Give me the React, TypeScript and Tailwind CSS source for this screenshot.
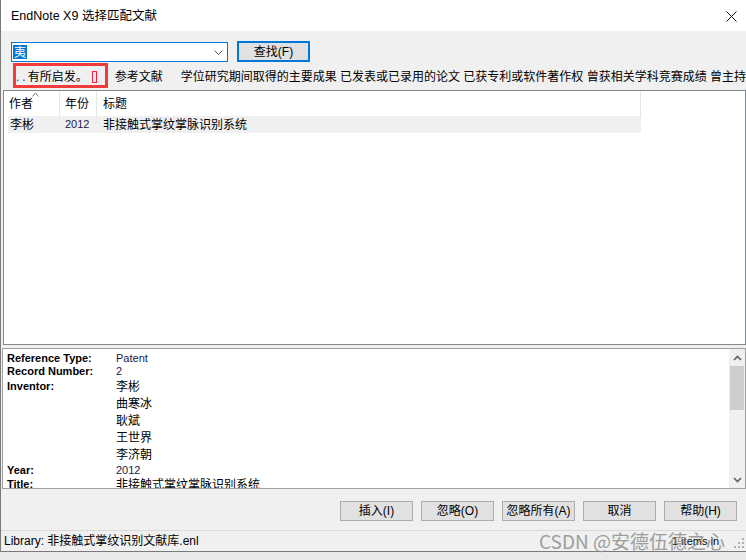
export default function App() {
  const inventors = ["李彬", "曲寒冰", "耿斌", "王世界", "李济朝"];
  const buttons = ["插入(I)", "忽略(O)", "忽略所有(A)", "取消", "帮助(H)"];

  return (
    <div className="w-[746px] h-[560px] overflow-hidden bg-[#e9e9e9] text-[12px] text-black font-['Liberation_Sans','Noto_Sans_CJK_SC',sans-serif] select-none">
      <div className="relative flex flex-col h-[552px] border-l border-b border-[#7a7a7a] bg-[#f0f0f0]">
        {/* Title bar */}
        <div className="h-[31px] shrink-0 bg-white flex items-center justify-between pl-[10px] pr-[9px]">
          <span className="leading-none pt-[1px] text-[12.5px]">EndNote X9 选择匹配文献</span>
          <svg width="11" height="11" viewBox="0 0 11 11" className="mt-[2px]">
            <path d="M0.5 0.5 L10.5 10.5 M10.5 0.5 L0.5 10.5" stroke="#111" strokeWidth="1" fill="none" />
          </svg>
        </div>

        {/* Search row */}
        <div className="h-[31px] shrink-0 flex items-start pt-[10px] pl-[10px]">
          <div className="w-[217px] h-[20px] mt-[1px] bg-white border border-[#0078d7] flex items-center pl-[1px] pr-[4px]">
            <span className="h-[14px] w-[14px] bg-[#0078d7] text-white text-[12px] leading-[14px] flex items-center justify-center font-['Noto_Sans_CJK_SC',sans-serif]">
              夷
            </span>
            <svg width="9" height="5" viewBox="0 0 9 5" className="ml-auto">
              <path d="M0.5 0.5 L4.5 4.5 L8.5 0.5" stroke="#555" strokeWidth="1" fill="none" />
            </svg>
          </div>
          <button className="ml-[9px] w-[73px] h-[21px] bg-[#e1e1e1] border-2 border-[#0078d7] flex items-center justify-center leading-none">
            查找(F)
          </button>
        </div>

        {/* Context text row */}
        <div className="h-[28px] shrink-0 flex items-center pl-[15px] whitespace-nowrap overflow-hidden leading-none pt-[1px]">
          <span className="text-[#2a1f5c]">.</span>
          <span className="ml-[3px] text-[#2a1f5c]">.</span>
          <span className="ml-[2px]">有所启发。</span>
          <span className="ml-[4px] inline-block w-[6px] h-[12px] border border-[#ff1f3d] bg-[#fff0f3]" />
          <span className="ml-[18px]">参考文献</span>
          <span className="ml-[18px]">学位研究期间取得的主要成果 已发表或已录用的论文 已获专利或软件著作权 曾获相关学科竞赛成绩 曾主持</span>
        </div>

        {/* annotation box */}
        <div className="absolute left-[12px] top-[63px] w-[95px] h-[25px] border-[3px] border-[#f23b3b]" />

        {/* List view */}
        <div className="ml-[2px] h-[255px] shrink-0 bg-white border border-[#828790] flex flex-col">
          <div className="relative h-[25px] flex items-stretch pt-[1px]">
            <div className="w-[56px] border-r border-[#e5e5e5] flex items-center pl-[5px]">作者</div>
            <div className="w-[37px] border-r border-[#e5e5e5] flex items-center pl-[5px]">年份</div>
            <div className="w-[544px] border-r border-[#e5e5e5] flex items-center pl-[6px]">标题</div>
            <svg width="7" height="5" viewBox="0 0 7 5" className="absolute left-[28px] top-[1px]">
              <path d="M0.5 4.5 L3.5 1 L6.5 4.5" stroke="#777" strokeWidth="1" fill="none" />
            </svg>
          </div>
          <div className="ml-[4px] w-[633px] h-[17px] bg-[#f0f0f0] flex items-center">
            <div className="w-[52px] pl-[2px]">李彬</div>
            <div className="w-[37px] pl-[5px] text-[11px] text-[#1a1a4a]">2012</div>
            <div className="pl-[6px]">非接触式掌纹掌脉识别系统</div>
          </div>
        </div>

        <div className="h-[3px] shrink-0" />

        {/* Preview pane */}
        <div className="ml-[1px] h-[141px] shrink-0 bg-white border border-[#a0a0a0] flex overflow-hidden">
          <div className="flex-1 pl-[4px] pt-[3px] text-[11px]">
            <div className="flex h-[13px] items-center">
              <div className="w-[109px] font-bold">Reference Type:</div>
              <div className="text-[#1a1a4a]">Patent</div>
            </div>
            <div className="flex h-[13px] items-center">
              <div className="w-[109px] font-bold">Record Number:</div>
              <div className="text-[#1a1a4a]">2</div>
            </div>
            <div className="flex">
              <div className="w-[109px] font-bold h-[17px] flex items-center">Inventor:</div>
              <div className="flex flex-col text-[12px]">
                {inventors.map((n) => (
                  <div key={n} className="h-[17px] flex items-center">
                    {n}
                  </div>
                ))}
              </div>
            </div>
            <div className="flex h-[14px] items-center">
              <div className="w-[109px] font-bold">Year:</div>
              <div className="text-[#1a1a4a]">2012</div>
            </div>
            <div className="flex h-[15px] items-center">
              <div className="w-[109px] font-bold">Title:</div>
              <div className="text-[12px]">非接触式掌纹掌脉识别系统</div>
            </div>
          </div>
          {/* Scrollbar */}
          <div className="w-[16px] bg-[#f0f0f0] flex flex-col">
            <div className="h-[17px] flex items-center justify-center">
              <svg width="9" height="6" viewBox="0 0 9 6">
                <path d="M1 5 L4.5 1.5 L8 5" stroke="#606060" strokeWidth="1.6" fill="none" />
              </svg>
            </div>
            <div className="mx-[1px] h-[44px] bg-[#cdcdcd]" />
            <div className="flex-1" />
            <div className="h-[17px] flex items-center justify-center">
              <svg width="9" height="6" viewBox="0 0 9 6">
                <path d="M1 1 L4.5 4.5 L8 1" stroke="#606060" strokeWidth="1.6" fill="none" />
              </svg>
            </div>
          </div>
        </div>

        {/* Buttons */}
        <div className="h-[41px] shrink-0 flex justify-end items-start pt-[12px] pr-[9px] gap-[8px]">
          {buttons.map((b) => (
            <button
              key={b}
              className="w-[73px] h-[20px] bg-[#e1e1e1] border border-[#adadad] flex items-center justify-center leading-none"
            >
              {b}
            </button>
          ))}
        </div>

        {/* Status bar */}
        <div className="h-[21px] shrink-0 border-t border-[#dadada] flex items-center pl-[3px] whitespace-nowrap">
          <span>Library: 非接触式掌纹识别文献库.enl</span>
          <span className="ml-auto w-[49px] overflow-hidden text-[11px]">1 items in list</span>
          <svg width="11" height="11" viewBox="0 0 11 11" className="ml-[13px] mr-[1px] mt-[4px]">
            <g fill="#b0b0b0">
              <rect x="8" y="0" width="2" height="2" />
              <rect x="4" y="4" width="2" height="2" />
              <rect x="8" y="4" width="2" height="2" />
              <rect x="0" y="8" width="2" height="2" />
              <rect x="4" y="8" width="2" height="2" />
              <rect x="8" y="8" width="2" height="2" />
            </g>
          </svg>
        </div>

        {/* Watermark */}
        <div className="absolute left-[538px] top-[529px] text-[19px] leading-[24px] text-[#8a8a8a] opacity-80 whitespace-nowrap font-['Noto_Sans_CJK_SC',sans-serif]">
          CSDN @安德伍德之心
        </div>
      </div>
    </div>
  );
}
